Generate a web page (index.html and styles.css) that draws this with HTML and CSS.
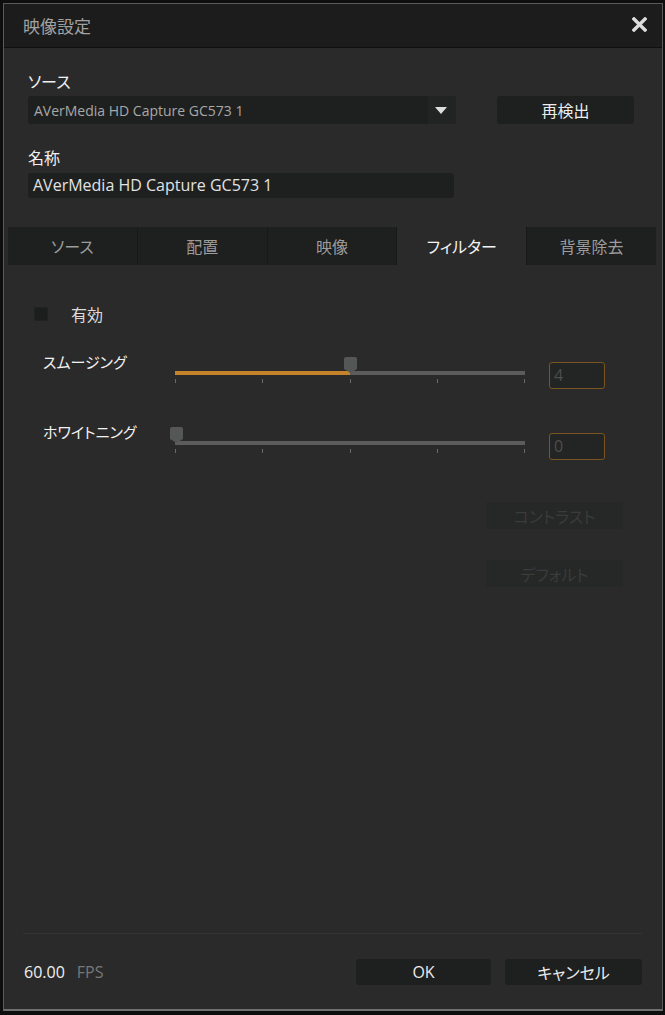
FILE: index.html
```html
<!DOCTYPE html>
<html lang="ja">
<head>
<meta charset="utf-8">
<title>映像設定</title>
<link rel="stylesheet" href="styles.css">
</head>
<body>
<div class="dialog">
  <div class="titlebar">
    <span class="title">映像設定</span>
    <svg class="close" width="15" height="15" viewBox="0 0 15 15"><path d="M2 2L13 13M13 2L2 13" stroke="#dcdcdc" stroke-width="3.4" stroke-linecap="square"/></svg>
  </div>
  <div class="body">
    <div class="top">
      <div class="label">ソース</div>
      <div class="srcrow">
        <div class="select">
          <span class="select-text">AVerMedia HD Capture GC573 1</span>
          <span class="select-arrow"><svg width="12" height="7" viewBox="0 0 12 7"><path d="M0 0H12L6 7Z" fill="#dedede"/></svg></span>
        </div>
        <div class="btn redetect">再検出</div>
      </div>
      <div class="label name-label">名称</div>
      <div class="name-input">AVerMedia HD Capture GC573 1</div>
    </div>
    <div class="tabs">
      <div class="tab">ソース</div>
      <div class="tab">配置</div>
      <div class="tab">映像</div>
      <div class="tab active">フィルター</div>
      <div class="tab">背景除去</div>
    </div>
    <div class="content">
      <div class="check-row">
        <span class="checkbox"></span>
        <span class="check-label">有効</span>
      </div>
      <div class="slider-row first">
        <div class="slider-label">スムージング</div>
        <div class="slider">
          <div class="track"><div class="fill" style="width:50%"></div></div>
          <div class="ticks"><i></i><i></i><i></i><i></i><i></i></div>
          <svg class="thumb" style="left:calc(50% - 6.5px)" width="13" height="16" viewBox="0 0 13 16"><path d="M2 0H11Q13 0 13 2V12L6.5 16L0 12V2Q0 0 2 0Z" fill="#555656"/></svg>
        </div>
        <div class="value">4</div>
      </div>
      <div class="slider-row second">
        <div class="slider-label">ホワイトニング</div>
        <div class="slider">
          <div class="track"><div class="fill" style="width:0%"></div></div>
          <div class="ticks"><i></i><i></i><i></i><i></i><i></i></div>
          <svg class="thumb" style="left:calc(0% - 5px)" width="13" height="16" viewBox="0 0 13 16"><path d="M2 0H11Q13 0 13 2V12L6.5 16L0 12V2Q0 0 2 0Z" fill="#555656"/></svg>
        </div>
        <div class="value">0</div>
      </div>
      <div class="side-buttons">
        <div class="btn disabled">コントラスト</div>
        <div class="btn disabled">デフォルト</div>
      </div>
    </div>
    <div class="footer">
      <div class="fps"><span class="fps-num">60.00</span><span class="fps-unit">FPS</span></div>
      <div class="footer-buttons">
        <div class="btn ok">OK</div>
        <div class="btn cancel">キャンセル</div>
      </div>
    </div>
  </div>
</div>
</body>
</html>
```

FILE: styles.css
```css
html, body {
  margin: 0;
  padding: 0;
  background: #0e0e0e;
}
body {
  width: 665px;
  height: 1015px;
  overflow: hidden;
  font-family: "Open Sans", "Noto Sans CJK JP", sans-serif;
  font-feature-settings: "palt";
}
.dialog {
  box-sizing: border-box;
  margin: 3px 0 0 3px;
  width: 660px;
  height: 1008px;
  border: 1px solid #5a5a5a;
  border-bottom: 2px solid #707070;
  display: flex;
  flex-direction: column;
  background: #2a2a2a;
}
.titlebar {
  height: 43px;
  flex: none;
  background: #1c1c1c;
  border-bottom: 1px solid #0f0f0f;
  display: flex;
  align-items: center;
  justify-content: space-between;
  padding: 0 15px 0 19px;
}
.title {
  font-size: 17px;
  color: #a2a2a2;
  font-family: "Noto Sans CJK JP", sans-serif;
}
.close {
  display: block;
  margin-top: -2px;
}
.body {
  flex: 1;
  display: flex;
  flex-direction: column;
}
.top {
  padding: 23px 0 0 24px;
}
.label {
  font-size: 16px;
  line-height: 20px;
  color: #f0f0f0;
  font-family: "Noto Sans CJK JP", sans-serif;
}
.srcrow {
  display: flex;
  margin-top: 5px;
}
.select {
  width: 428px;
  height: 28px;
  background: #1e1f1f;
  border-radius: 3px;
  display: flex;
  align-items: center;
  justify-content: space-between;
}
.select-text {
  font-size: 14px;
  color: #a8a8a8;
  padding-left: 6px;
}
.select-arrow {
  width: 28px;
  height: 28px;
  display: flex;
  align-items: center;
  justify-content: center;
  background: #222323;
  border-radius: 0 3px 3px 0;
}
.select-arrow svg { display: block; margin-left: -2px; }
.btn {
  box-sizing: border-box;
  display: flex;
  align-items: center;
  justify-content: center;
  background: #1e1f1f;
  border-radius: 3px;
  color: #ececec;
  font-size: 16px;
}
.redetect {
  width: 137px;
  height: 28px;
  margin-left: 41px;
}
.name-label {
  margin-top: 23px;
}
.name-input {
  box-sizing: border-box;
  width: 426px;
  height: 25px;
  margin-top: 6px;
  background: #1e1f1f;
  border-radius: 3px;
  font-size: 16px;
  line-height: 25px;
  color: #e2e2e2;
  padding-left: 5px;
}
.tabs {
  display: flex;
  margin: 29px 6px 0 4px;
  height: 38px;
}
.tab {
  flex: 1;
  display: flex;
  align-items: center;
  justify-content: center;
  background: #1e1f1f;
  border-right: 1px solid #171818;
  color: #9c9c9c;
  font-size: 16px;
  font-family: "Noto Sans CJK JP", sans-serif;
}
.tab:last-child { border-right: none; }
.tab.active {
  background: #2a2a2a;
  color: #f4f4f4;
}
.content {
  flex: 1;
  padding-top: 39px;
}
.check-row {
  display: flex;
  align-items: center;
  height: 20px;
  padding-left: 30px;
}
.checkbox {
  box-sizing: border-box;
  width: 14px;
  height: 14px;
  background: #1c1e1e;
  border: 1px solid #202222;
  border-radius: 2px;
}
.check-label {
  margin-left: 23px;
  font-size: 16px;
  color: #dcdcdc;
  font-family: "Noto Sans CJK JP", sans-serif;
}
.slider-row {
  display: grid;
  grid-template-columns: 108px 350px 56px;
  column-gap: 24px;
  align-items: start;
  padding-left: 39px;
}
.slider-row.first { margin-top: 28px; }
.slider-row.second { margin-top: 33px; }
.slider-label {
  font-size: 15px;
  line-height: 20px;
  color: #f2f2f2;
  font-family: "Noto Sans CJK JP", sans-serif;
}
.slider {
  position: relative;
  margin-top: 5px;
  padding-top: 14px;
}
.track {
  height: 4px;
  background: #5c5c5c;
}
.fill {
  height: 4px;
  background: #c4832a;
}
.ticks {
  display: flex;
  justify-content: space-between;
  margin-top: 4px;
  height: 4px;
}
.ticks i {
  width: 1px;
  height: 4px;
  background: #6a6a6a;
}
.thumb {
  position: absolute;
  top: 0;
  display: block;
}
.value {
  box-sizing: border-box;
  margin-top: 10px;
  height: 27px;
  border: 1px solid #7a5522;
  border-radius: 3px;
  background: #232424;
  color: #4e4e4e;
  font-size: 16px;
  line-height: 25px;
  padding-left: 4px;
}
.second .value { margin-top: 11px; }
.side-buttons {
  display: flex;
  flex-direction: column;
  align-items: flex-end;
  padding-right: 39px;
  margin-top: 42px;
  gap: 31px;
}
.btn.disabled {
  width: 137px;
  height: 27px;
  background: #262727;
  color: #3b3b3b;
}
.footer {
  flex: none;
  margin: 0 20px 0 19px;
  border-top: 1px solid #333333;
  display: flex;
  justify-content: space-between;
  align-items: center;
  padding: 25px 0 24px 1px;
}
.fps {
  font-size: 16px;
  display: flex;
  gap: 12px;
}
.fps-num { color: #f0f0f0; }
.fps-unit { color: #777777; }
.footer-buttons {
  display: flex;
  gap: 14px;
}
.ok {
  width: 135px;
  height: 26px;
}
.cancel {
  width: 137px;
  height: 26px;
}
```
